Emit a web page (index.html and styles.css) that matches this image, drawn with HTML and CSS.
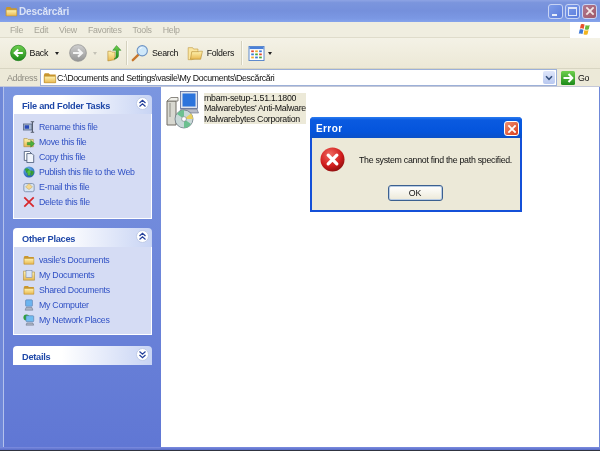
FILE: index.html
```html
<!DOCTYPE html>
<html lang="en">
<head>
<meta charset="utf-8">
<title>Descărcări</title>
<link rel="stylesheet" href="styles.css">
</head>
<body>
<svg class="defs" width="0" height="0" aria-hidden="true">
  <defs>
    <linearGradient id="fold" x1="0" y1="0" x2="0" y2="1"><stop offset="0" stop-color="#fff3b0"/><stop offset="1" stop-color="#e8b850"/></linearGradient>
    <linearGradient id="green" x1="0" y1="0" x2="0" y2="1"><stop offset="0" stop-color="#6fd04e"/><stop offset="1" stop-color="#1c8a18"/></linearGradient>
    <linearGradient id="grey" x1="0" y1="0" x2="0" y2="1"><stop offset="0" stop-color="#d0d0d0"/><stop offset="1" stop-color="#949494"/></linearGradient>
    <radialGradient id="red" cx="0.4" cy="0.3" r="0.8"><stop offset="0" stop-color="#f06a60"/><stop offset="0.6" stop-color="#d01c1c"/><stop offset="1" stop-color="#7a0c0c"/></radialGradient>
    <radialGradient id="globe" cx="0.4" cy="0.3" r="0.8"><stop offset="0" stop-color="#6cb8f0"/><stop offset="1" stop-color="#1c52a8"/></radialGradient>
    <symbol id="folder" viewBox="0 0 16 16"><path d="M1 4.500 2 2.500h4.500L8 4h6.500v9.500h-13.500z" fill="#c9962e"/><path d="M1.500 6h13v7.500h-13z" fill="url(#fold)" stroke="#b98a2c" stroke-width=".6"/></symbol>
  </defs>
</svg>
<div class="window">
  <header class="titlebar">
    <svg class="title-icon" width="13" height="13"><use href="#folder"/></svg>
    <span class="title-text">Descărcări</span>
    <div class="win-buttons">
      <span class="win-btn"><i class="glyph-min"></i></span>
      <span class="win-btn"><i class="glyph-max"></i></span>
      <span class="win-btn win-close">
        <svg width="10" height="10" viewBox="0 0 11 11"><path d="M1.500 1.500l8 8M9.500 1.500l-8 8" stroke="#f2e6e6" stroke-width="2"/></svg>
      </span>
    </div>
  </header>

  <nav class="menubar">
    <span class="menu-item">File</span><span class="menu-item">Edit</span><span class="menu-item">View</span><span class="menu-item">Favorites</span><span class="menu-item">Tools</span><span class="menu-item">Help</span>
    <div class="flag-box">
      <svg width="15" height="14" viewBox="0 0 16 15">
        <path d="M3 1.500c1.600-.7 2.800-.5 4 .2L6 6.300c-1.200-.7-2.500-.9-4-.2z" fill="#e8502c"/>
        <path d="M8.200 2.100c1.500.8 2.800.7 4.300 0l-1 4.500c-1.500.7-2.800.8-4.300 0z" fill="#6cb83c"/>
        <path d="M1.800 7c1.500-.7 2.800-.5 4 .2l-1 4.600c-1.200-.7-2.500-.9-4-.2z" fill="#3c78d8"/>
        <path d="M6.900 7.500c1.500.8 2.800.7 4.300 0l-1 4.500c-1.500.7-2.800.8-4.300 0z" fill="#f2b41e"/>
      </svg>
    </div>
  </nav>

  <div class="toolbar">
    <div class="tool tool-back">
      <svg width="18" height="18" viewBox="0 0 20 20"><circle cx="10" cy="10" r="9.300" fill="url(#green)" stroke="#1a7a18" stroke-width=".8"/><path d="M15.500 10H6.500M10 5.800 5.600 10l4.400 4.200" fill="none" stroke="#fff" stroke-width="2.400"/></svg>
      <span class="tool-label">Back</span><i class="caret"></i>
    </div>
    <div class="tool tool-forward">
      <svg width="18" height="18" viewBox="0 0 20 20"><circle cx="10" cy="10" r="9.300" fill="url(#grey)" stroke="#909090" stroke-width=".8"/><path d="M4.500 10h9M10 5.800 14.400 10 10 14.200" fill="none" stroke="#f4f4f4" stroke-width="2.400"/></svg>
      <i class="caret caret-off"></i>
    </div>
    <div class="tool tool-up">
      <svg width="15" height="18" viewBox="0 0 17 19"><path d="M1 7.500h3.500l1 1H9V17L1 18.500z" fill="url(#fold)" stroke="#b48a30" stroke-width=".7"/><path d="M10.800 1 15.800 6.500H13v6c0 2-2 3.800-5 3.800 1.500-1 2.200-2.200 2.200-3.800V6.500H6.500z" fill="url(#green)" stroke="#1a7a18" stroke-width=".5"/></svg>
    </div>
    <span class="sep sep-first"></span>
    <div class="tool tool-search">
      <svg width="18" height="18" viewBox="0 0 20 20"><path d="M8 12 2 18" stroke="#c8762c" stroke-width="2.600" stroke-linecap="round"/><circle cx="12.500" cy="7.500" r="5.700" fill="#cfe8fa" stroke="#6e94c4" stroke-width="1.200"/><path d="M9.500 6c.6-1.300 1.800-2 3-2" stroke="#fff" fill="none"/></svg>
      <span class="tool-label">Search</span>
    </div>
    <div class="tool tool-folders">
      <svg width="17" height="16" viewBox="0 0 18 18"><path d="M1 3h5l1 1.500h5V14L5 16.500H1z" fill="#fbe6a0" stroke="#c09a40" stroke-width=".7"/><path d="M5 7.500h8l1-.5h3l-2 9H3.500z" fill="url(#fold)" stroke="#b48a30" stroke-width=".7"/></svg>
      <span class="tool-label">Folders</span>
    </div>
    <span class="sep sep-second"></span>
    <div class="tool tool-views">
      <svg width="17" height="15" viewBox="0 0 18 17"><rect x=".5" y=".5" width="17" height="16" fill="#fff" stroke="#4a7cc8"/><rect x="1" y="1" width="16" height="2.500" fill="#4a80d8"/><rect x="3" y="5" width="3" height="2" fill="#e04a30"/><rect x="7.500" y="5" width="3" height="2" fill="#f0a830"/><rect x="12" y="5" width="3" height="2" fill="#3c78d8"/><rect x="3" y="8.500" width="3" height="2" fill="#3c78d8"/><rect x="7.500" y="8.500" width="3" height="2" fill="#48a838"/><rect x="12" y="8.500" width="3" height="2" fill="#e04a30"/><rect x="3" y="12" width="3" height="2" fill="#f0a830"/><rect x="7.500" y="12" width="3" height="2" fill="#3c78d8"/><rect x="12" y="12" width="3" height="2" fill="#48a838"/></svg>
      <i class="caret caret-small"></i>
    </div>
  </div>

  <div class="addressbar">
    <span class="addr-label">Address</span>
    <div class="addr-field">
      <svg width="14" height="14"><use href="#folder"/></svg>
      <span class="addr-text">C:\Documents and Settings\vasile\My Documents\Descărcări</span>
      <span class="addr-drop"><svg width="8" height="6" viewBox="0 0 9 7"><path d="M1 1.500 4.500 5 8 1.500" fill="none" stroke="#36507c" stroke-width="1.800"/></svg></span>
    </div>
    <div class="go">
      <svg class="go-icon" width="14" height="14" viewBox="0 0 14 14"><rect width="14" height="14" rx="1.500" fill="url(#green)"/><path d="M2.500 7h8M7.500 3l3.800 4-3.800 4" fill="none" stroke="#fff" stroke-width="2"/></svg>
      <span>Go</span>
    </div>
  </div>

  <div class="main">
    <aside class="sidebar">
      <section class="panel">
        <h2 class="panel-head">File and Folder Tasks<span class="chev"><svg width="9" height="9" viewBox="0 0 9 9"><path d="M1.500 4 4.500 1.200 7.500 4M1.500 7.500 4.500 4.700 7.500 7.500" fill="none" stroke="#24409c" stroke-width="1.200"/></svg></span></h2>
        <ul class="panel-body">
          <li class="link"><svg width="12" height="12" viewBox="0 0 14 14"><rect x=".5" y="3.500" width="10" height="7" fill="#a8b8d0" stroke="#5a6a88"/><rect x="2" y="5" width="5" height="4" fill="#2848b8"/><path d="M9 1h4M9 13h4M11 1v12" stroke="#505868" stroke-width="1.200" fill="none"/></svg>Rename this file</li>
          <li class="link"><svg width="12" height="12" viewBox="0 0 14 14"><path d="M1 3h4l1 1h6v8.500H1z" fill="url(#fold)" stroke="#a88a40" stroke-width=".7"/><path d="M5 10.500h4V13l4.500-4L9 5v2.500H5z" fill="#4cb03c" stroke="#2a7a24" stroke-width=".5"/></svg>Move this file</li>
          <li class="link"><svg width="12" height="12" viewBox="0 0 14 14"><path d="M1.500.5h6l2 2V11h-8z" fill="#fff" stroke="#4a5a78"/><path d="M4.500 3h6l2 2v8.500h-8z" fill="#f0f4fc" stroke="#4a5a78"/></svg>Copy this file</li>
          <li class="link"><svg width="12" height="12" viewBox="0 0 14 14"><circle cx="7" cy="7" r="6.500" fill="url(#globe)"/><path d="M2 3.500c2-1.500 4-1 5 .5 0 2-2 3-3.500 3zM9 5l3.500 1c.5 3-1 4.500-3 5.500z" fill="#38a038"/><path d="M7 4 10.500 8H8.500v3h-3V8H3.500z" fill="#58c840" stroke="#1e6a1e" stroke-width=".4"/></svg>Publish this file to the Web</li>
          <li class="link"><svg width="12" height="12" viewBox="0 0 14 14"><rect x="1" y="3" width="12" height="9.500" rx="2" fill="#d8e4f4" stroke="#7a8cac"/><path d="M3 7l4-4 4 4-4 3z" fill="#f4d890" stroke="#b89848" stroke-width=".5"/></svg>E-mail this file</li>
          <li class="link"><svg width="12" height="12" viewBox="0 0 14 14"><path d="M1.500 1.500 12.500 12.500M12.500 1.500 1.500 12.500" stroke="#d8282c" stroke-width="2"/></svg>Delete this file</li>
        </ul>
      </section>
      <section class="panel">
        <h2 class="panel-head">Other Places<span class="chev"><svg width="9" height="9" viewBox="0 0 9 9"><path d="M1.500 4 4.500 1.200 7.500 4M1.500 7.500 4.500 4.700 7.500 7.500" fill="none" stroke="#24409c" stroke-width="1.200"/></svg></span></h2>
        <ul class="panel-body panel-body-short">
          <li class="link"><svg width="12" height="12"><use href="#folder"/></svg>vasile's Documents</li>
          <li class="link"><svg width="12" height="12" viewBox="0 0 14 14"><path d="M.5 2.500h4l1 1h8v9.500H.5z" fill="url(#fold)" stroke="#a88a40" stroke-width=".7"/><rect x="3.500" y="1.500" width="7" height="8.500" fill="#d8e4f8" stroke="#6a7ca0" stroke-width=".6"/></svg>My Documents</li>
          <li class="link"><svg width="12" height="12"><use href="#folder"/></svg>Shared Documents</li>
          <li class="link"><svg width="12" height="12" viewBox="0 0 14 14"><rect x="3" y="1" width="8" height="7.500" rx="1" fill="#6cb4f0" stroke="#5878a8" stroke-width=".7"/><path d="M3.500 10h7l1 3h-9z" fill="#b0b8c8" stroke="#606a80" stroke-width=".6"/></svg>My Computer</li>
          <li class="link"><svg width="12" height="12" viewBox="0 0 14 14"><circle cx="4" cy="4" r="3.500" fill="#2ca03c"/><rect x="3.500" y="2" width="9" height="7" rx="1" fill="#70bcf0" stroke="#5878a8" stroke-width=".7"/><path d="M4.500 10.500h7l1 2.500h-9z" fill="#b0b8c8" stroke="#606a80" stroke-width=".6"/></svg>My Network Places</li>
        </ul>
      </section>
      <section class="panel panel-details">
        <h2 class="panel-head">Details<span class="chev"><svg width="9" height="9" viewBox="0 0 9 9"><path d="M1.500 1.500 4.500 4.300 7.500 1.500M1.500 5 4.500 7.800 7.500 5" fill="none" stroke="#24409c" stroke-width="1.200"/></svg></span></h2>
      </section>
    </aside>
    <div class="files">
      <div class="file">
        <svg class="file-icon" width="34" height="38" viewBox="0 0 34 38">
          <path d="M2 10h9v24H2z" fill="#d8d8d0" stroke="#706c64"/>
          <path d="M2 10 6 6.500h7V10z" fill="#f0f0ea" stroke="#706c64" stroke-width=".8"/>
          <path d="M5 12v14" stroke="#8c8c84"/>
          <rect x="15.500" y=".5" width="17" height="17" fill="#dfe3ec" stroke="#5a6a98" stroke-width=".8"/>
          <rect x="17.500" y="2.500" width="13" height="13" fill="#2c74dc"/>
          <path d="M16 18h16l1.500 4H14z" fill="#b8bcc8" stroke="#606880" stroke-width=".6"/>
          <circle cx="19" cy="28" r="9" fill="#c8d8d8" stroke="#606c78" stroke-width=".7"/>
          <path d="M19 28 12 23A9 9 0 0 1 19 19zM19 28 26 33A9 9 0 0 1 19 37z" fill="#6cc090"/>
          <path d="M19 28 26 22.500A9 9 0 0 1 28 28z" fill="#e8d060"/>
          <circle cx="19" cy="28" r="2.400" fill="#fff" stroke="#707880" stroke-width=".6"/>
        </svg>
        <div class="file-text">
          <span>mbam-setup-1.51.1.1800</span>
          <span>Malwarebytes' Anti-Malware</span>
          <span>Malwarebytes Corporation</span>
        </div>
      </div>
    </div>
  </div>
  <div class="bottom-edge"></div>

  <div class="dialog">
    <div class="dlg-title">
      <span>Error</span>
      <span class="dlg-close"><svg width="10" height="10" viewBox="0 0 11 11"><path d="M1.500 1.500l8 8M9.500 1.500l-8 8" stroke="#fff" stroke-width="2"/></svg></span>
    </div>
    <div class="dlg-body">
      <div class="dlg-msg">
        <svg width="25" height="25" viewBox="0 0 26 26"><circle cx="13" cy="13" r="12.500" fill="url(#red)"/><path d="M8.500 8.500l9 9M17.500 8.500l-9 9" stroke="#fff" stroke-width="3.400" stroke-linecap="round"/></svg>
        <span class="dlg-text">The system cannot find the path specified.</span>
      </div>
      <button class="dlg-ok" type="button">OK</button>
    </div>
  </div>
</div>
</body>
</html>
```
FILE: styles.css
```css
* { box-sizing: border-box; }
html, body { margin: 0; padding: 0; }
body { width: 600px; height: 451px; overflow: hidden; font-family: "Liberation Sans", Arial, sans-serif; font-size: 8.8px; letter-spacing: -.28px; color: #000; }
.defs { position: absolute; }

.window { position: relative; width: 600px; height: 451px; display: flex; flex-direction: column; background: #6f88d8; filter: blur(.3px); }

.titlebar { height: 22px; flex: none; display: flex; align-items: center; padding: 0 3px 0 5px;
  background: linear-gradient(180deg, #8ea4e4 0, #7b95dd 12%, #7590dc 50%, #7b98e4 85%, #86a4ec 100%); }
.title-icon { margin-right: 1px; }
.title-text { color: #dbe3f6; font-weight: bold; font-size: 10px; letter-spacing: -.1px; }
.win-buttons { margin-left: auto; display: flex; gap: 2px; }
.win-btn { width: 15px; height: 15px; border: 1px solid #c8d4f4; border-radius: 3px; background: linear-gradient(135deg, #7e9ce8, #5a7cdc); display: flex; align-items: center; justify-content: center; position: relative; }
.win-close { background: linear-gradient(135deg, #b07890, #a05868); }
.glyph-min { position: absolute; left: 3px; bottom: 2px; width: 5px; height: 2px; background: #e8eefa; }
.glyph-max { width: 9px; height: 9px; border: 1px solid #dfe6f8; border-top-width: 2px; }

.menubar { height: 16px; flex: none; display: flex; align-items: center; gap: 11px; padding-left: 10px; background: #f0eee0; border-bottom: 1px solid #dfdccb; color: #a6a498; }
.flag-box { margin-left: auto; width: 30px; height: 16px; background: #fff; display: flex; align-items: center; justify-content: center; }

.toolbar { height: 31px; flex: none; display: flex; align-items: center; padding-left: 10px; background: linear-gradient(180deg, #f4f2e6, #ece8d6); border-bottom: 1px solid #d8d5c2; color: #111; }
.tool { display: flex; align-items: center; flex: none; }
.tool-back { width: 49px; }
.tool-label { margin-left: 3px; }
.caret { flex: none; width: 0; height: 0; border: 2.500px solid transparent; border-top: 3px solid #222; border-bottom: 0; margin-left: 7px; }
.caret-off { border-top-color: #c4c2b6; margin-left: 6px; }
.caret-small { margin-left: 3px; }
.tool-forward { margin-left: 10px; width: 28px; }
.tool-up { margin-left: 10px; width: 19px; }
.sep { width: 2px; height: 24px; flex: none; background: linear-gradient(90deg, #d4d1be 50%, #fbfaf2 50%); }
.sep-first { margin-right: 3px; }
.tool-search { width: 46px; }
.tool-search svg { flex: none; }
.tool-folders { margin-left: 10px; width: 47px; }
.sep-second { margin: 0 5px 0 7px; }

.addressbar { height: 18px; flex: none; display: flex; align-items: center; background: #ece9d8; border-bottom: 1px solid #c4c8d8; }
.addr-label { width: 40px; padding-left: 7px; color: #8c8a80; }
.addr-field { width: 517px; height: 17px; display: flex; align-items: center; background: #fff; border: 1px solid #9cb0d8; padding-left: 2px; color: #111; }
.addr-text { margin-left: 0; flex: 1; letter-spacing: -.36px; }
.addr-drop { width: 12px; height: 13px; margin-right: 1px; background: linear-gradient(180deg, #dfe6fa, #b8c8f0); border-radius: 2px; display: flex; align-items: center; justify-content: center; }
.go { display: flex; align-items: center; gap: 3px; margin-left: 4px; color: #111; }
.go-icon { display: block; }

.main { flex: 1; min-height: 0; display: flex; margin: 0 1px 0 3px; }
.sidebar { width: 158px; flex: none; padding: 8px 9px 0 9px; display: flex; flex-direction: column; gap: 9px; background: linear-gradient(180deg, #7b96e0, #6077d4); border-left: 1px solid #b4c2ec; }
.panel-details { margin-top: 2px; }
.panel-head { margin: 0; height: 19px; padding: 2px 3px 0 9px; display: flex; align-items: center; justify-content: space-between; font-size: 9.2px; letter-spacing: -.25px; font-weight: bold; color: #1f48a8; background: linear-gradient(90deg, #fff 35%, #c8d4f4); border-radius: 4px 4px 0 0; }
.chev { width: 13px; height: 13px; margin-top: -4px; border-radius: 50%; background: #fff; border: 1px solid #c0cce8; display: flex; align-items: center; justify-content: center; }
.panel-body { margin: 0; padding: 5px 0 0 9px; height: 105px; list-style: none; background: #d5dcf4; border: 1px solid #fff; border-top: 0; }
.panel-body-short { height: 88px; }
.link { height: 15px; display: flex; align-items: center; gap: 4px; color: #2f50c4; white-space: nowrap; }
.link svg { flex: none; }

.files { flex: 1; min-width: 0; background: #fff; padding: 4px 0 0 4px; }
.file { display: flex; align-items: flex-start; }
.file-icon { flex: none; margin-right: 5px; }
.file-text { margin-top: 2px; display: flex; flex-direction: column; background: #ece9d8; color: #111; line-height: 10.3px; white-space: nowrap; }

.bottom-edge { height: 4px; flex: none; background: linear-gradient(180deg, #7c8ce0 0, #5a6ec8 70%, #303440 75%); }

.dialog { position: absolute; left: 310px; top: 117px; width: 212px; height: 95px; display: flex; flex-direction: column; border: 2px solid #1450d8; border-top: 0; border-radius: 4px 4px 0 0; background: #ece9d8; }
.dlg-title { height: 21px; flex: none; margin: 0 -2px; padding: 2px 3px 0 6px; display: flex; align-items: center; justify-content: space-between; color: #fff; font-weight: bold; font-size: 10px; letter-spacing: .4px; border-radius: 4px 4px 0 0; background: linear-gradient(180deg, #2a7cf0 0, #0a5ae0 15%, #0454dc 70%, #0a50c8 100%); }
.dlg-close { width: 15px; height: 15px; border: 1px solid #fff; border-radius: 3px; background: linear-gradient(135deg, #f09070, #d83c1c); display: flex; align-items: center; justify-content: center; }
.dlg-body { flex: 1; display: flex; flex-direction: column; align-items: center; }
.dlg-msg { align-self: stretch; display: flex; align-items: center; padding: 9px 0 0 8px; }
.dlg-text { margin-left: 14px; color: #111; }
.dlg-ok { margin-top: 13px; margin-right: 2px; width: 55px; height: 16px; padding: 0; font-family: inherit; font-size: 8.8px; color: #111; background: linear-gradient(180deg, #fff, #ece9d8); border: 1px solid #3c6090; box-shadow: inset 0 0 0 1px #b8cce4; border-radius: 3px; }
```
